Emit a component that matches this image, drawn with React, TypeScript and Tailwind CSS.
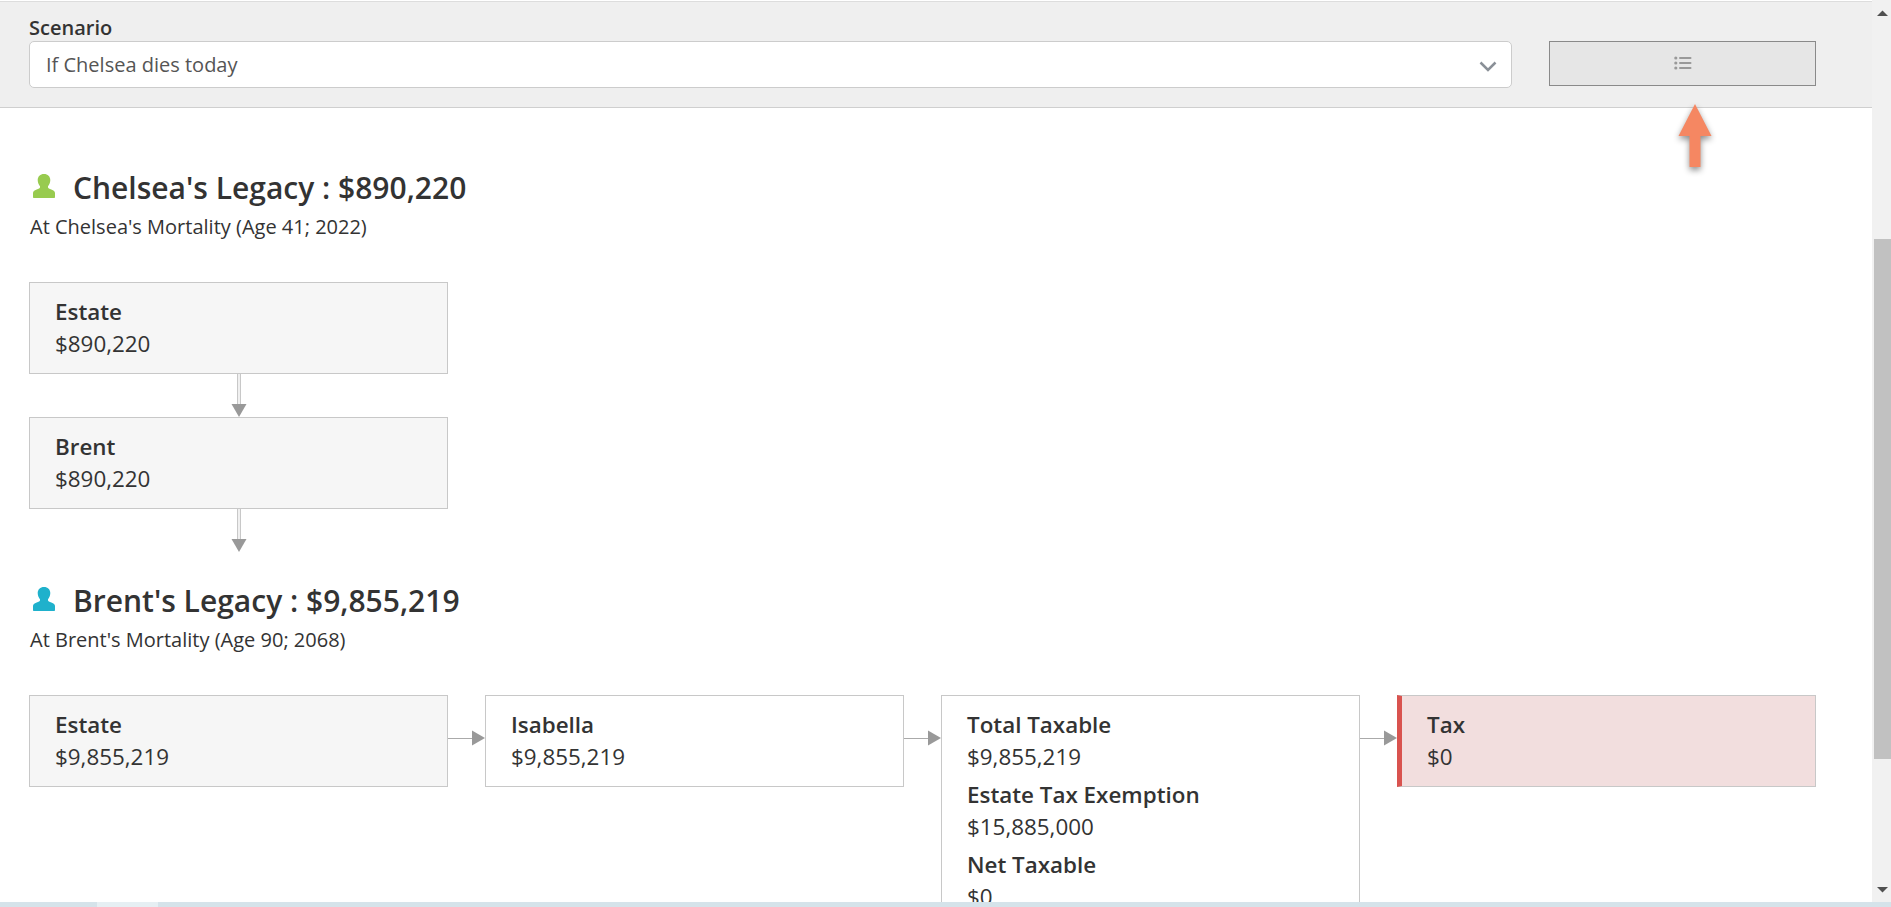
import React from "react";

const font = { fontFamily: '"Open Sans", "Noto Sans", sans-serif' };

function Person({ color }: { color: string }) {
  return (
    <svg width="22" height="24" viewBox="0 0 22 24" className="shrink-0 -mt-[4px]">
      <path
        fill={color}
        d="M11 0c3.800 0 6.300 2.600 6.300 6 0 2.600-1 4.800-2.300 6.200v1c0 1 1.500 1.600 3.300 2.200 2.500.8 3.700 1.800 3.700 3.600V23c0 .6-.4 1-1 1H1c-.6 0-1-.4-1-1v-4c0-1.800 1.200-2.800 3.700-3.600 1.800-.6 3.300-1.200 3.300-2.200v-1C5.700 10.800 4.700 8.600 4.700 6 4.700 2.600 7.200 0 11 0z"
      />
    </svg>
  );
}

function Entry({ label, value, last }: { label: string; value: string; last?: boolean }) {
  return (
    <div className={last ? "" : "mb-1.5"}>
      <div className="text-[22.4px] leading-8 font-semibold text-[#333333]">{label}</div>
      <div className="text-[22.4px] leading-8 text-[#333333]">{value}</div>
    </div>
  );
}

function Box({
  children,
  tone = "white",
  className = "",
}: {
  children: React.ReactNode;
  tone?: "white" | "gray" | "red";
  className?: string;
}) {
  const toneClass =
    tone === "gray"
      ? "bg-[#f6f6f6] pl-[25px]"
      : tone === "red"
      ? "bg-[#f2dede] border-l-[5px] border-l-[#d9534f] pl-[25px]"
      : "bg-white pl-[25px]";
  return (
    <div className={`w-[419px] shrink-0 border border-[#c8c8c8] pt-[13px] pb-[13px] pr-4 ${toneClass} ${className}`}>
      {children}
    </div>
  );
}

function DownArrow() {
  return (
    <div className="w-[419px] flex flex-col items-center h-[43px]">
      <div className="w-[4px] h-[30px] border-x border-[#c8c8c8] bg-[#f0f0f0]" />
      <svg width="16" height="13" viewBox="0 0 16 13" className="block">
        <path d="M0.500 0H15.500L8 13z" fill="#999999" />
      </svg>
    </div>
  );
}

function RightArrow() {
  return (
    <div className="w-[37px] shrink-0 h-[86px] flex items-center">
      <div className="w-[24px] h-[1px] bg-[#aaaaaa]" />
      <svg width="13" height="16" viewBox="0 0 13 16" className="block">
        <path d="M0 0.500V15.500L13 8z" fill="#999999" />
      </svg>
    </div>
  );
}

function Heading({ color, title, sub }: { color: string; title: string; sub: string }) {
  return (
    <div>
      <div className="flex items-center gap-[18px] pl-[4px] h-[38px]">
        <Person color={color} />
        <h2 className="text-[30px] leading-[38px] font-semibold text-[#333333]">{title}</h2>
      </div>
      <div className="text-[20px] leading-6 text-[#333333] mt-[8px] ml-px">{sub}</div>
    </div>
  );
}

export default function App() {
  return (
    <div style={font} className="relative w-[1891px] h-[907px] overflow-hidden bg-white flex flex-col">
      <div className="flex flex-1 min-h-0">
        <main className="flex-1 min-w-0 flex flex-col overflow-hidden">
          <header className="h-[107px] shrink-0 bg-[#efefef] border-t border-t-[#dddddd] border-b border-b-[#cfcfcf] mt-px pl-[29px] pr-[56px] flex items-start gap-[37px]">
            <div className="flex-1">
              <label className="block text-[20px] leading-[22px] font-semibold text-[#333333] mt-[15px]">Scenario</label>
              <div className="h-[47px] mt-[2px] bg-white border border-[#cccccc] rounded-[5px] flex items-center justify-between pl-[16px] pr-[14px]">
                <span className="text-[20px] text-[#555555]">If Chelsea dies today</span>
                <svg width="18" height="11" viewBox="0 0 18 11" className="mt-[4px]">
                  <path d="M1.500 1.500L9 9l7.500-7.500" fill="none" stroke="#8a9097" strokeWidth="2.500" />
                </svg>
              </div>
            </div>
            <button className="w-[267px] h-[45px] mt-[39px] bg-[#e6e6e6] border border-[#8a8a8a] flex items-center justify-center">
              <svg width="18" height="14" viewBox="0 0 18 14" className="-mt-[1px]">
                <g fill="#999999">
                  <circle cx="1.800" cy="2" r="1.600" />
                  <circle cx="1.800" cy="7" r="1.600" />
                  <circle cx="1.800" cy="12" r="1.600" />
                  <rect x="5" y="1" width="12.500" height="2" rx="1" />
                  <rect x="5" y="6" width="12.500" height="2" rx="1" />
                  <rect x="5" y="11" width="12.500" height="2" rx="1" />
                </g>
              </svg>
            </button>
          </header>

          <div className="pl-[29px] pt-[61px]">
            <Heading color="#98cb4f" title="Chelsea's Legacy : $890,220" sub="At Chelsea's Mortality (Age 41; 2022)" />
            <div className="mt-[43px]">
              <Box tone="gray">
                <Entry label="Estate" value="$890,220" last />
              </Box>
              <DownArrow />
              <Box tone="gray">
                <Entry label="Brent" value="$890,220" last />
              </Box>
              <DownArrow />
            </div>

            <div className="mt-[30px]">
              <Heading color="#1fb1cc" title="Brent's Legacy : $9,855,219" sub="At Brent's Mortality (Age 90; 2068)" />
            </div>
            <div className="mt-[43px] flex items-start">
              <Box tone="gray">
                <Entry label="Estate" value="$9,855,219" last />
              </Box>
              <RightArrow />
              <Box>
                <Entry label="Isabella" value="$9,855,219" last />
              </Box>
              <RightArrow />
              <Box>
                <Entry label="Total Taxable" value="$9,855,219" />
                <Entry label="Estate Tax Exemption" value="$15,885,000" />
                <Entry label="Net Taxable" value="$0" last />
              </Box>
              <RightArrow />
              <Box tone="red">
                <Entry label="Tax" value="$0" last />
              </Box>
            </div>
          </div>
        </main>

        <aside className="w-[19px] shrink-0 bg-[#f1f1f1] flex flex-col">
          <svg width="19" height="24" viewBox="0 0 19 24" className="shrink-0">
            <path d="M5 16L10.500 10.500 16 16z" fill="#505050" />
          </svg>
          <div className="h-[215px] shrink-0" />
          <div className="h-[520px] ml-[2px] bg-[#c1c1c1] shrink-0" />
          <div className="flex-1" />
          <svg width="19" height="24" viewBox="0 0 19 24" className="shrink-0">
            <path d="M5 9L10.500 14.500 16 9z" fill="#505050" />
          </svg>
        </aside>
      </div>

      <div className="h-[5px] shrink-0 bg-[#d5e3ea] pl-[97px]">
        <div className="w-[61px] h-full bg-[#e6eff3]" />
      </div>

      <svg width="60" height="80" viewBox="0 0 60 80" className="absolute left-[1665px] top-[95px] pointer-events-none" style={{ filter: "drop-shadow(0 3px 3px rgba(0,0,0,.45))" }}>
        <path d="M30 9L46.500 41H35.500V72H24.500V41H13.500z" fill="#f58762" />
      </svg>
    </div>
  );
}
